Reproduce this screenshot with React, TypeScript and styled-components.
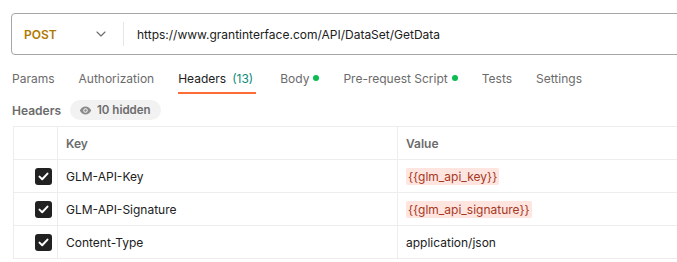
import React from "react";
import styled, { createGlobalStyle } from "styled-components";

const Global = createGlobalStyle`
  html, body { margin: 0; padding: 0; background: #fff; }
  body { font-family: Inter, "Noto Sans", Arial, sans-serif; font-size: 12px; color: #212121; overflow: hidden; }
  * { box-sizing: border-box; }
`;

const Page = styled.div`
  width: 677px;
  height: 262px;
  overflow: hidden;
  padding-top: 13px;
`;

const UrlBar = styled.div`
  margin-left: 11px;
  width: 720px;
  height: 42px;
  border: 1px solid #a6a6a6;
  border-radius: 4px;
  display: flex;
  align-items: center;
`;

const Method = styled.div`
  width: 111px;
  padding-left: 12px;
  padding-right: 17px;
  display: flex;
  align-items: center;
  justify-content: space-between;
  color: #b07a00;
  font-weight: 600;
  font-size: 12px;
`;

const Divider = styled.div`
  width: 1px;
  height: 24px;
  background: #e6e6e6;
`;

const Url = styled.div`
  padding-left: 13px;
  font-size: 12px;
  color: #212121;
`;

const Tabs = styled.div`
  display: flex;
  margin-top: 7px;
  padding-left: 12px;
  gap: 24px;
  height: 32px;
`;

const Tab = styled.div<{ $active?: boolean }>`
  display: flex;
  align-items: center;
  gap: 4px;
  height: 32px;
  font-size: 12px;
  color: ${(p) => (p.$active ? "#212121" : "#6b6b6b")};
  border-bottom: 2px solid ${(p) => (p.$active ? "#ff6c37" : "transparent")};
  padding-top: 2px;
  padding-right: ${(p) => (p.$active ? "3px" : "0")};
`;

const Count = styled.span`
  color: #0b8a7a;
  margin-left: 2px;
`;

const Dot = styled.span`
  width: 6px;
  height: 6px;
  border-radius: 50%;
  background: #0cbb52;
  display: inline-block;
`;

const SubHeader = styled.div`
  display: flex;
  align-items: center;
  gap: 9px;
  padding-left: 12px;
  margin-top: 6px;
  height: 20px;
`;

const SubTitle = styled.span`
  color: #6b6b6b;
  font-weight: 600;
  font-size: 12px;
`;

const Pill = styled.div`
  display: flex;
  align-items: center;
  gap: 5px;
  height: 20px;
  padding: 0 10px 0 9px;
  border-radius: 10px;
  background: #f2f2f2;
  color: #6b6b6b;
  font-weight: 600;
  font-size: 11.5px;
`;

const Table = styled.div`
  margin-top: 6px;
  margin-left: 13px;
  width: 700px;
  border-top: 1px solid #ededed;
  border-left: 1px solid #ededed;
`;

const Row = styled.div`
  display: grid;
  grid-template-columns: 44px 340px 1fr;
  height: 33px;
  border-bottom: 1px solid #ededed;
`;

const Cell = styled.div<{ $head?: boolean; $check?: boolean }>`
  display: flex;
  align-items: center;
  padding-left: ${(p) => (p.$check ? "21px" : "8px")};
  border-right: 1px solid #ededed;
  font-size: 12px;
  color: ${(p) => (p.$head ? "#6b6b6b" : "#212121")};
  font-weight: ${(p) => (p.$head ? 600 : 400)};
`;

const CheckBox = styled.div`
  width: 17px;
  height: 17px;
  border-radius: 3px;
  background: #212121;
  display: flex;
  align-items: center;
  justify-content: center;
`;

const Var = styled.span`
  background: #ffe5df;
  color: #a73824;
  padding: 1px 2px;
  border-radius: 2px;
`;

const Chevron = () => (
  <svg width="10" height="6" viewBox="0 0 10 6" fill="none">
    <path d="M1 1l4 4 4-4" stroke="#6b6b6b" strokeWidth="1.1" strokeLinecap="round" strokeLinejoin="round" />
  </svg>
);

const Eye = () => (
  <svg width="13" height="9" viewBox="0 0 13 9" fill="none">
    <path d="M0.8 4.5C2.2 1.8 4.2 0.6 6.5 0.6s4.3 1.2 5.7 3.9C10.8 7.2 8.8 8.4 6.5 8.4S2.2 7.2 0.8 4.5z" fill="#8a8a8a" />
    <circle cx="6.5" cy="4.5" r="2.2" fill="#f2f2f2" />
    <circle cx="6.5" cy="4.5" r="1.2" fill="#8a8a8a" />
  </svg>
);

const Check = () => (
  <svg width="11" height="9" viewBox="0 0 11 9" fill="none">
    <path d="M1.5 4.6l2.7 2.6L9.5 1.6" stroke="#fff" strokeWidth="2" strokeLinecap="round" strokeLinejoin="round" />
  </svg>
);

const rows: { key: string; value: React.ReactNode }[] = [
  { key: "GLM-API-Key", value: <Var>{"{{glm_api_key}}"}</Var> },
  { key: "GLM-API-Signature", value: <Var>{"{{glm_api_signature}}"}</Var> },
  { key: "Content-Type", value: "application/json" },
];

export default function App() {
  return (
    <>
      <Global />
      <Page>
        <UrlBar>
          <Method>
            <span>POST</span>
            <Chevron />
          </Method>
          <Divider />
          <Url>https://www.grantinterface.com/API/DataSet/GetData</Url>
        </UrlBar>
        <Tabs>
          <Tab>Params</Tab>
          <Tab>Authorization</Tab>
          <Tab $active>
            Headers<Count>(13)</Count>
          </Tab>
          <Tab>
            Body <Dot />
          </Tab>
          <Tab>
            Pre-request Script <Dot />
          </Tab>
          <Tab>Tests</Tab>
          <Tab>Settings</Tab>
        </Tabs>
        <SubHeader>
          <SubTitle>Headers</SubTitle>
          <Pill>
            <Eye />
            10 hidden
          </Pill>
        </SubHeader>
        <Table>
          <Row>
            <Cell $check />
            <Cell $head>Key</Cell>
            <Cell $head>Value</Cell>
          </Row>
          {rows.map((r) => (
            <Row key={r.key}>
              <Cell $check>
                <CheckBox>
                  <Check />
                </CheckBox>
              </Cell>
              <Cell>{r.key}</Cell>
              <Cell>{r.value}</Cell>
            </Row>
          ))}
        </Table>
      </Page>
    </>
  );
}
